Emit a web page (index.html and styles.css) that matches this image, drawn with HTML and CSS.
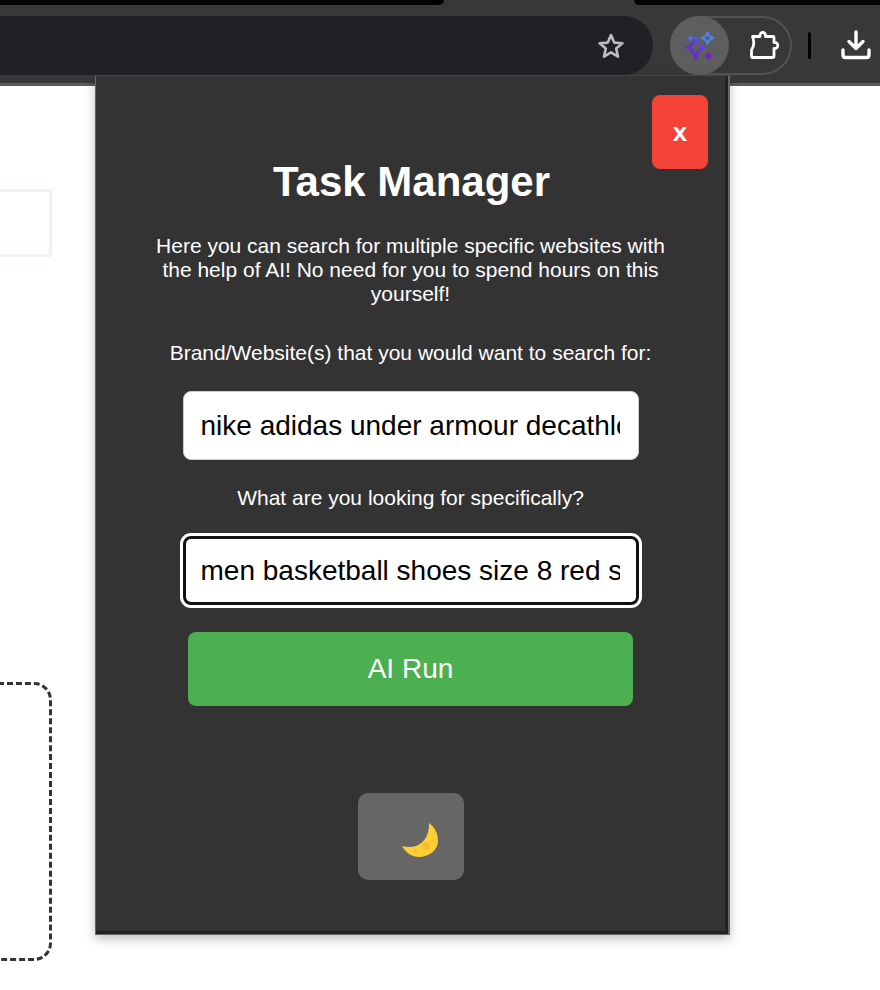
FILE: index.html
```html
<!DOCTYPE html>
<html>
	<head>
		<meta charset="utf-8">
		<title>Task Manager</title>
		<link rel="stylesheet" href="styles.css">
	</head>
	<body>
		<div class="tabstrip">
			<div class="strip-left"></div>
			<div class="strip-right"></div>
		</div>
		<div class="toolbar">
			<div class="omnibox">
				<svg class="star" viewBox="0 0 28 28" width="28" height="28">
					<polygon points="14,3 17.2,10.6 25.4,11.3 19.2,16.6 21,24.6 14,20.4 7,24.6 8.8,16.6 2.6,11.3 10.8,10.6" fill="none" stroke="#bdbdbd" stroke-width="2.6" stroke-linejoin="round"/>
				</svg>
			</div>
			<div class="ext-pill">
				<div class="ext-active">
					<svg viewBox="0 0 32 32" width="32" height="32">
						<defs>
							<linearGradient id="spark" x1="0.8" y1="0" x2="0.2" y2="1">
								<stop offset="0" stop-color="#4f6fe8"/>
								<stop offset="0.4" stop-color="#5f35dc"/>
								<stop offset="1" stop-color="#6d22c4"/>
							</linearGradient>
						</defs>
						<path d="M11.500 7.500 Q13 15.500 20 17.500 Q13 20 11.500 28.500 Q10 20 3 17.500 Q10 15.500 11.500 7.500Z" fill="none" stroke="url(#spark)" stroke-width="2.6" stroke-linejoin="round"/>
						<path d="M23.500 2.500 Q24.500 6.500 29 8 Q24.500 9.500 23.500 13.500 Q22.500 9.500 18 8 Q22.500 6.500 23.500 2.500Z" fill="none" stroke="#4f7fe8" stroke-width="2.4" stroke-linejoin="round"/>
						<path d="M6.500 4 Q7 7 10 8 Q7 9 6.500 12 Q6 9 3 8 Q6 7 6.500 4Z" fill="#4f6fe8"/>
						<path d="M24.500 21 Q25.500 25 29.500 26 Q25.500 27 24.500 31 Q23.500 27 19.500 26 Q23.500 25 24.500 21Z" fill="#6d22c4"/>
					</svg>
				</div>
				<svg class="puzzle" viewBox="0 0 30 30" width="30" height="30">
					<path d="M3.500 5.500 H11 C10.500 0 17 0 16.500 5.500 H24 Q25 5.500 25 6.500 V11.500 C30 11 30 18 25 17.500 V25 Q25 26.500 23.500 26.500 H4 Q2.500 26.500 2.500 25 V19 Q6.500 13 3.500 5.500Z" fill="none" stroke="#fff" stroke-width="2.8" stroke-linejoin="round"/>
				</svg>
			</div>
			<div class="divider"></div>
			<svg class="download" viewBox="0 0 30 30" width="30" height="30">
				<path d="M15 2 V18 M8 11.500 L15 18.500 L22 11.500" fill="none" stroke="#fff" stroke-width="3.4" stroke-linecap="round" stroke-linejoin="round"/>
				<path d="M2 20 V25 Q2 27.500 4.500 27.500 H25.500 Q28 27.500 28 25 V20" fill="none" stroke="#fff" stroke-width="3.4" stroke-linecap="round" stroke-linejoin="round"/>
			</svg>
		</div>

		<div class="page">
			<div class="page-box"></div>
			<div class="drop-box"></div>
		</div>

		<div class="popup">
			<button type="button" class="close-btn">x</button>
			<h1 class="title">Task Manager</h1>
			<p class="intro">Here you can search for multiple specific websites with the help of AI! No need for you to spend hours on this yourself!</p>
			<label class="field-label">Brand/Website(s) that you would want to search for:</label>
			<input class="field" type="text" value="nike adidas under armour decathlon">
			<label class="field-label second">What are you looking for specifically?</label>
			<input class="field focused" type="text" value="men basketball shoes size 8 red shoes">
			<button type="button" class="run-btn">AI Run</button>
			<button type="button" class="theme-btn">
				<svg viewBox="0 0 38 36" width="38" height="36">
					<path d="M28 1 C34 5 37 12 37 19 C37 28 28 35 18 35 C11 35 5 31 1 24 C5 25 9 25.500 13 24.500 C22 22.500 28.500 14 28 1Z" fill="#fcd034"/>
					<circle cx="25" cy="24" r="4" fill="#f6bf2c"/>
					<circle cx="14" cy="29" r="2" fill="#f6bf2c"/>
					<circle cx="32" cy="18.500" r="1.500" fill="#f6bf2c"/>
				</svg>
			</button>
		</div>
	</body>
</html>
```

FILE: styles.css
```css
body {
	margin: 0;
	width: 880px;
	height: 990px;
	overflow: hidden;
	background-color: #fff;
	font-family: "Liberation Sans", Arial, sans-serif;
	position: relative;
}

/* browser chrome */
.tabstrip {
	height: 5px;
	background-color: #383838;
	display: flex;
	justify-content: space-between;
}
.strip-left {
	width: 444px;
	background-color: #000;
	border-bottom-right-radius: 6px;
}
.strip-right {
	width: 246px;
	background-color: #000;
	border-bottom-left-radius: 6px;
}
.toolbar {
	height: 78px;
	background-color: #383838;
	border-bottom: 3px solid #5a5a5a;
	display: flex;
	align-items: flex-start;
}
.omnibox {
	width: 653px;
	height: 59px;
	margin-top: 11px;
	background-color: #202124;
	border-radius: 0 30px 30px 0;
	display: flex;
	align-items: center;
	justify-content: flex-end;
	padding-right: 28px;
	box-sizing: border-box;
}
.ext-pill {
	width: 122px;
	height: 59px;
	margin: 11px 0 0 17px;
	box-sizing: border-box;
	border: 2px solid #545454;
	border-radius: 30px;
	display: flex;
	align-items: center;
}
.ext-active {
	width: 59px;
	height: 59px;
	margin-left: -2px;
	flex-shrink: 0;
	border-radius: 50%;
	background-color: #5e5e5e;
	display: flex;
	align-items: center;
	justify-content: center;
}
.puzzle {
	margin-left: 20px;
}
.divider {
	width: 3px;
	height: 27px;
	margin: 27px 0 0 16px;
	background-color: #000;
	border-radius: 2px;
}
.download {
	margin: 25px 0 0 30px;
}

/* page behind the popup */
.page {
	width: 72px;
	margin-left: -20px;
	padding-top: 103px;
}
.page-box {
	height: 68px;
	box-sizing: border-box;
	border: 3px solid #eef2f2;
}
.drop-box {
	height: 279px;
	margin-top: 425px;
	box-sizing: border-box;
	border: 3px dashed #333;
	border-radius: 18px;
}

/* extension popup */
.popup {
	position: absolute;
	left: 95px;
	top: 75px;
	width: 635px;
	height: 860px;
	box-sizing: border-box;
	background-color: #333;
	border: 1px solid #666;
	border-right-width: 2px;
	border-top-color: #40484a;
	box-shadow: inset -3px -3px 0 #1d2424, 0 4px 10px rgba(0, 0, 0, .25);
	display: flex;
	flex-direction: column;
	align-items: center;
	padding-right: 3px;
	color: #fff;
}
.close-btn {
	position: absolute;
	left: 556px;
	top: 19px;
	width: 56px;
	height: 74px;
	border: none;
	border-radius: 8px;
	background-color: #f44336;
	color: #fff;
	font-family: inherit;
	font-size: 26px;
	font-weight: bold;
}
.title {
	margin: 82px 0 0 2px;
	font-size: 42px;
	line-height: 48px;
	font-weight: bold;
}
.intro {
	width: 520px;
	margin: 28px 0 0;
	font-size: 21px;
	line-height: 24px;
	text-align: center;
}
.field-label {
	margin-top: 35px;
	font-size: 21px;
	line-height: 24px;
	text-align: center;
}
.field-label.second {
	margin-top: 26px;
}
.field {
	width: 456px;
	height: 69px;
	margin-top: 26px;
	padding: 0 18px 0 17px;
	box-sizing: border-box;
	border: 1px solid #ccc;
	border-radius: 8px;
	background-color: #fff;
	color: #000;
	font-family: inherit;
	font-size: 28px;
}
.field.focused {
	border: 3px solid #111;
	outline: 3px solid #fff;
	padding: 0 16px 0 15px;
}
.run-btn {
	width: 445px;
	height: 74px;
	margin-top: 27px;
	border: none;
	border-radius: 8px;
	background-color: #4caf50;
	color: #fff;
	font-family: inherit;
	font-size: 28px;
}
.theme-btn {
	width: 106px;
	height: 87px;
	margin-top: 87px;
	padding: 7px 0 0 18px;
	border: none;
	border-radius: 10px;
	background-color: #666;
	display: flex;
	align-items: center;
	justify-content: center;
}
```
